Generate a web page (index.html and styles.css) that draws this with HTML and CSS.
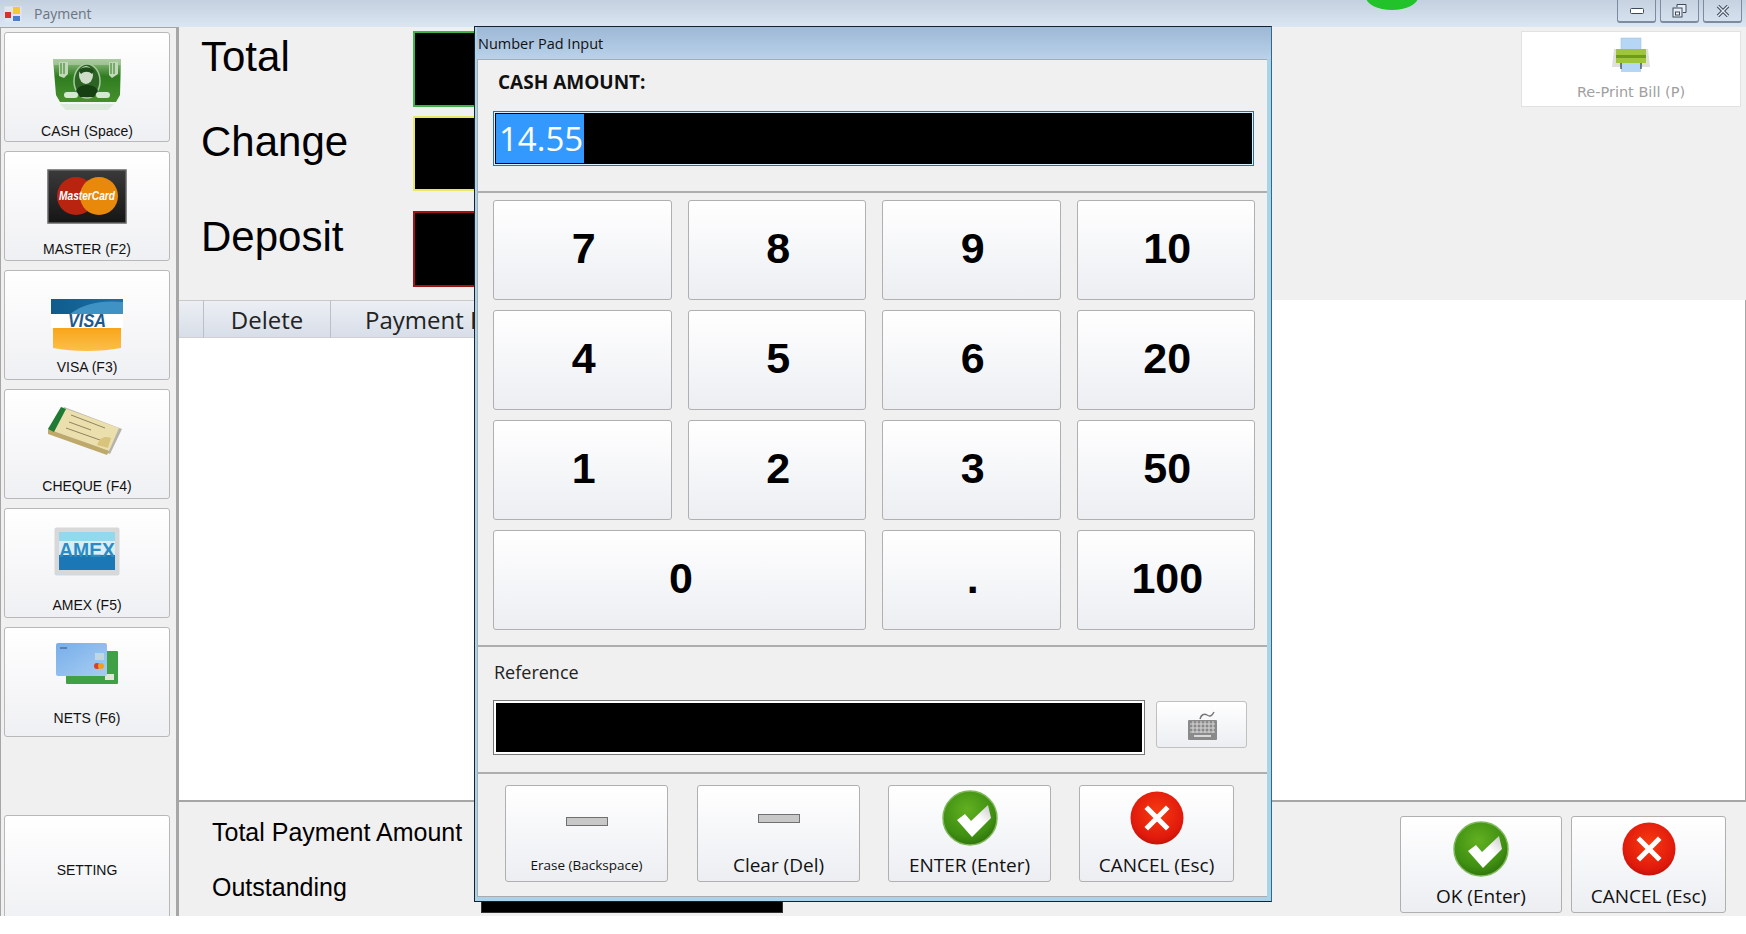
FILE: index.html
```html
<!DOCTYPE html>
<html lang="en">
<head>
    <meta charset="UTF-8">
    <title>Payment</title>
    <link rel="stylesheet" href="styles.css">
</head>
<body>
<svg class="sprite" width="0" height="0">
    <defs>
        <radialGradient id="okFill" cx="45%" cy="35%" r="70%">
            <stop offset="0" stop-color="#62b020"/>
            <stop offset="0.7" stop-color="#3f8f12"/>
            <stop offset="1" stop-color="#2c6e0a"/>
        </radialGradient>
        <radialGradient id="noFill" cx="50%" cy="40%" r="65%">
            <stop offset="0" stop-color="#f83a10"/>
            <stop offset="0.75" stop-color="#e01a0c"/>
            <stop offset="1" stop-color="#b81008"/>
        </radialGradient>
        <linearGradient id="checkFill" x1="0" y1="1" x2="1" y2="0">
            <stop offset="0" stop-color="#fff"/>
            <stop offset="0.6" stop-color="#fff"/>
            <stop offset="1" stop-color="#c8c8c8"/>
        </linearGradient>
        <linearGradient id="noteFill" x1="0" y1="0" x2="0" y2="1">
            <stop offset="0" stop-color="#9cc48c"/>
            <stop offset="0.4" stop-color="#2f7d20"/>
            <stop offset="1" stop-color="#478f2c"/>
        </linearGradient>
        <linearGradient id="mcFrame" x1="0" y1="0" x2="0" y2="1">
            <stop offset="0" stop-color="#3a3a3a"/>
            <stop offset="1" stop-color="#151515"/>
        </linearGradient>
        <linearGradient id="visaTop" x1="0" y1="0" x2="1" y2="0">
            <stop offset="0" stop-color="#0f5c8c"/>
            <stop offset="1" stop-color="#1d6fa5"/>
        </linearGradient>
        <linearGradient id="visaBottom" x1="0" y1="0" x2="0" y2="1">
            <stop offset="0" stop-color="#f9a51a"/>
            <stop offset="1" stop-color="#fbc04a"/>
        </linearGradient>
        <linearGradient id="cardBlue" x1="0" y1="0" x2="1" y2="1">
            <stop offset="0" stop-color="#78aeea"/>
            <stop offset="1" stop-color="#a6cdf2"/>
        </linearGradient>
        <symbol id="okIcon" viewBox="0 0 56 56">
            <circle cx="28" cy="28" r="27" fill="url(#okFill)" stroke="#7fb85a" stroke-width="1.5"/>
            <path d="M15 30l8-6 6 7 17-16 3 13-19 19z" fill="url(#checkFill)"/>
        </symbol>
        <symbol id="noIcon" viewBox="0 0 56 56">
            <circle cx="28" cy="28" r="26.5" fill="url(#noFill)"/>
            <path d="M19 19l18 18M37 19L19 37" stroke="#fff" stroke-width="5" stroke-linecap="square" fill="none"/>
        </symbol>
    </defs>
</svg>

<div class="app-window">
    <div class="title-bar">
        <svg class="app-icon" width="18" height="18" viewBox="0 0 18 18">
            <rect x="0.5" y="1.5" width="17" height="16" fill="#dfe6ee"/>
            <rect x="1" y="7" width="6" height="6" fill="#d8322a"/>
            <rect x="9" y="2" width="7" height="7" fill="#f3c93a"/>
            <rect x="9" y="11" width="7" height="5" fill="#4a7fd0"/>
        </svg>
        <span class="title-text">Payment</span>
        <div class="status-dot"></div>
        <div class="window-buttons">
            <div class="window-button">
                <svg width="14" height="6" viewBox="0 0 14 6"><rect x="0.5" y="0.5" width="13" height="5" rx="1" fill="#fff" stroke="#3d4a5c"/></svg>
            </div>
            <div class="window-button">
                <svg width="15" height="14" viewBox="0 0 15 14"><path d="M5 3V.5h9v8h-3" fill="#e8eef5" stroke="#3d4a5c"/><rect x="1" y="4" width="9" height="9" fill="#e8eef5" stroke="#3d4a5c"/><rect x="3.5" y="8" width="4" height="3" fill="#fff" stroke="#3d4a5c"/></svg>
            </div>
            <div class="window-button">
                <svg width="14" height="12" viewBox="0 0 14 12"><path d="M2 1l10 10M12 1L2 11" stroke="#3d4a5c" stroke-width="3.4"/><path d="M2 1l10 10M12 1L2 11" stroke="#e8eef5" stroke-width="1.4"/></svg>
            </div>
        </div>
    </div>

    <div class="app-body">
        <div class="tender-sidebar">
            <button class="tender-button">
                <svg class="tender-icon" width="74" height="54" viewBox="0 0 74 54">
                    <path d="M3 1h68l-1 36-4 7H10l-4-7z" fill="url(#noteFill)"/>
                    <path d="M3 1h68v6H3z" fill="#b5d0ae" opacity="0.6"/>
                    <path d="M9 4h9v12l-4 4-5-2zM59 4h9v12l-6 4-3-3z" fill="#c2d8bb"/>
                    <path d="M11 5v11M14 5v11M61 5v11M64 5v11" stroke="#5f9a52" stroke-width="1.5"/>
                    <ellipse cx="37" cy="23" rx="13" ry="17" fill="#2b6423" stroke="#a7c89e" stroke-width="1.5"/>
                    <ellipse cx="36" cy="17" rx="7" ry="9" fill="#cfdcc8"/>
                    <path d="M29 13c2-5 12-5 15 0l-2 3c-3-3-8-3-11 0z" fill="#1f4d1a"/>
                    <path d="M26 33c3-8 19-8 22 0l-4 6H30z" fill="#163f12"/>
                    <rect x="14" y="34" width="14" height="6" rx="3" fill="#d6e8cf"/>
                    <rect x="46" y="34" width="14" height="6" rx="3" fill="#d6e8cf"/>
                    <path d="M10 46h54l-6 6H16z" fill="#cfe2cb" opacity="0.6"/>
                </svg>
                <span class="tender-label">CASH (Space)</span>
            </button>
            <button class="tender-button">
                <svg class="tender-icon" width="80" height="55" viewBox="0 0 80 55">
                    <rect x="1" y="1" width="78" height="53" fill="url(#mcFrame)" stroke="#666" stroke-width="1.5"/>
                    <circle cx="29" cy="27" r="19" fill="#b8240f"/>
                    <circle cx="52" cy="27" r="19" fill="#e8890c"/>
                    <text class="card-mark" x="40" y="31" font-size="12" textLength="56" lengthAdjust="spacingAndGlyphs">MasterCard</text>
                </svg>
                <span class="tender-label">MASTER (F2)</span>
            </button>
            <button class="tender-button">
                <svg class="tender-icon" width="74" height="56" viewBox="0 0 74 56">
                    <path d="M1 1h72v15H1z" fill="url(#visaTop)"/>
                    <path d="M20 16C34 5 52 2 73 4v12z" fill="#3f93c4"/>
                    <rect x="1" y="16" width="72" height="14" fill="#fff"/>
                    <path d="M3 30h68v20c-20 4-48 4-68 0z" fill="url(#visaBottom)"/>
                    <text class="visa-mark" x="37" y="29" font-size="18" textLength="38" lengthAdjust="spacingAndGlyphs">VISA</text>
                </svg>
                <span class="tender-label">VISA (F3)</span>
            </button>
            <button class="tender-button">
                <svg class="tender-icon" width="80" height="50" viewBox="0 0 80 50">
                    <path d="M4 22L17 1l58 22-12 25z" fill="#7e7a6c" opacity="0.55"/>
                    <path d="M1 23L14 1l58 21-10 23z" fill="#ecdfae"/>
                    <path d="M1 23v5l59 21 2-4z" fill="#bea96a"/>
                    <path d="M1 23L14 1l5 2L7 26z" fill="#1f7a35"/>
                    <path d="M24 9l34 13M22 16l22 8M19 22l34 12" stroke="#8d8560" stroke-width="1"/>
                    <path d="M50 39c3-8 8-9 14-7l-3 10z" fill="#d9c47c"/>
                </svg>
                <span class="tender-label">CHEQUE (F4)</span>
            </button>
            <button class="tender-button">
                <svg class="tender-icon" width="66" height="49" viewBox="0 0 66 49">
                    <rect x="0.5" y="0.5" width="65" height="48" rx="2" fill="#d8d8d8"/>
                    <rect x="5" y="5" width="56" height="9" fill="#92d9ee"/>
                    <rect x="5" y="14" width="56" height="14" fill="#d9eef6"/>
                    <rect x="5" y="28" width="56" height="15" fill="#1b77b5"/>
                    <text class="amex-mark" x="33" y="30" font-size="20" textLength="56" lengthAdjust="spacingAndGlyphs">AMEX</text>
                </svg>
                <span class="tender-label">AMEX (F5)</span>
            </button>
            <button class="tender-button">
                <svg class="tender-icon" width="64" height="44" viewBox="0 0 64 44">
                    <rect x="11" y="9" width="52" height="33" rx="1" fill="#3fa045"/>
                    <rect x="50" y="32" width="9" height="6" fill="#dfe8d8"/>
                    <rect x="1" y="1" width="51" height="33" rx="2" fill="url(#cardBlue)"/>
                    <rect x="40" y="11" width="9" height="7" fill="#c4d6dc"/>
                    <circle cx="42" cy="24" r="3" fill="#d8402a"/>
                    <circle cx="46" cy="24" r="3" fill="#f0a020"/>
                    <rect x="5" y="5" width="7" height="2" fill="#5d7fb0"/>
                </svg>
                <span class="tender-label">NETS (F6)</span>
            </button>
            <button class="tender-button setting-button">
                <span class="tender-label">SETTING</span>
            </button>
        </div>

        <div class="main-panel">
            <div class="summary-panel">
                <div class="summary-grid">
                    <div class="summary-label">Total</div>
                    <div class="summary-box box-green"></div>
                    <div class="summary-label">Change</div>
                    <div class="summary-box box-yellow"></div>
                    <div class="summary-label deposit-row">Deposit</div>
                    <div class="summary-box box-red deposit-row"></div>
                </div>
                <button class="reprint-button">
                    <svg width="42" height="36" viewBox="0 0 42 36">
                        <rect x="11" y="1" width="20" height="14" fill="#b5d6f5" stroke="#9cc0e0" stroke-width="0.5"/>
                        <path d="M2 30l2-18h34l2 18z" fill="#dfdfdc"/>
                        <rect x="6" y="12" width="30" height="14" fill="#9fc63a"/>
                        <rect x="6" y="18" width="30" height="3" fill="#6e9a1e"/>
                        <rect x="11" y="26" width="20" height="9" fill="#b5d6f5"/>
                        <path d="M11 26v6M31 26v6" stroke="#2a3a4a" stroke-width="1.2"/>
                    </svg>
                    <span class="reprint-label">Re-Print Bill (P)</span>
                </button>
            </div>

            <div class="payment-grid">
                <div class="grid-header">
                    <div class="grid-cell row-head"></div>
                    <div class="grid-cell delete-col">Delete</div>
                    <div class="grid-cell payment-col">Payment Method</div>
                </div>
            </div>

            <div class="footer-panel">
                <div class="footer-grid">
                    <div class="footer-label">Total Payment Amount</div>
                    <div class="footer-box"></div>
                    <div class="footer-label">Outstanding</div>
                    <div class="footer-box"></div>
                </div>
                <div class="footer-actions">
                    <button class="action-button">
                        <svg class="action-icon" width="56" height="56"><use href="#okIcon"/></svg>
                        <span>OK (Enter)</span>
                    </button>
                    <button class="action-button cancel-wide">
                        <svg class="action-icon" width="56" height="56"><use href="#noIcon"/></svg>
                        <span>CANCEL (Esc)</span>
                    </button>
                </div>
            </div>
        </div>
    </div>
</div>

<div class="numpad-window">
    <div class="numpad-title">Number Pad Input</div>
    <div class="numpad-body">
        <div class="amount-section">
            <div class="amount-label">CASH AMOUNT:</div>
            <div class="amount-input"><span class="amount-selected">14.55</span></div>
        </div>
        <div class="keypad">
            <button class="key">7</button>
            <button class="key">8</button>
            <button class="key">9</button>
            <button class="key">10</button>
            <button class="key">4</button>
            <button class="key">5</button>
            <button class="key">6</button>
            <button class="key">20</button>
            <button class="key">1</button>
            <button class="key">2</button>
            <button class="key">3</button>
            <button class="key">50</button>
            <button class="key key-zero">0</button>
            <button class="key">.</button>
            <button class="key">100</button>
        </div>
        <div class="reference-section">
            <div class="reference-label">Reference</div>
            <div class="reference-row">
                <div class="reference-input"></div>
                <button class="keyboard-button">
                    <svg width="34" height="32" viewBox="0 0 34 32">
                        <path d="M15 10c1-4 4-6 7-4s5 1 7-3" fill="none" stroke="#777" stroke-width="1.5"/>
                        <rect x="3" y="11" width="29" height="20" rx="1" fill="#8a8a8a"/>
                        <path d="M5 15h25M5 19h25M5 23h25M8 12v12M12 12v12M16 12v12M20 12v12M24 12v12M28 12v12" stroke="#d8d8d8" stroke-width="1"/>
                        <rect x="9" y="26" width="17" height="2" fill="#d8d8d8"/>
                    </svg>
                </button>
            </div>
        </div>
        <div class="numpad-actions">
            <button class="action-button pad-action erase-button">
                <span class="dash-icon"></span>
                <span class="erase-text">Erase (Backspace)</span>
            </button>
            <button class="action-button pad-action clear-button">
                <span class="dash-icon"></span>
                <span>Clear (Del)</span>
            </button>
            <button class="action-button pad-action">
                <svg class="action-icon" width="56" height="56"><use href="#okIcon"/></svg>
                <span>ENTER (Enter)</span>
            </button>
            <button class="action-button pad-action cancel-narrow">
                <svg class="action-icon" width="56" height="56"><use href="#noIcon"/></svg>
                <span>CANCEL (Esc)</span>
            </button>
        </div>
    </div>
</div>
</body>
</html>
```

FILE: styles.css
```css
* {
    margin: 0;
    padding: 0;
    box-sizing: border-box;
}

html, body {
    height: 100%;
    background-color: #fff;
    overflow: hidden;
}

body {
    position: relative;
    font-family: 'Liberation Sans', Arial, sans-serif;
    color: #000;
}

button {
    font: inherit;
    color: inherit;
}

.sprite {
    position: absolute;
}

.app-window {
    height: 916px;
    display: flex;
    flex-direction: column;
    overflow: hidden;
}

.title-bar {
    position: relative;
    height: 27px;
    flex-shrink: 0;
    display: flex;
    align-items: center;
    padding-left: 4px;
    background: linear-gradient(#c3d0df, #dbe6f2);
}

.app-icon {
    margin-right: 12px;
}

.title-text {
    font-family: 'Open Sans', sans-serif;
    font-size: 14px;
    color: #6b7480;
}

.status-dot {
    position: absolute;
    top: -16px;
    left: 1366px;
    width: 52px;
    height: 26px;
    border-radius: 50%;
    background-color: #22c32a;
}

.window-buttons {
    display: flex;
    gap: 4px;
    align-self: flex-start;
    margin-left: auto;
    margin-right: 4px;
}

.window-button {
    width: 39px;
    height: 23px;
    display: flex;
    align-items: center;
    justify-content: center;
    border: 1px solid #7d8ba0;
    border-top: none;
    border-bottom-width: 2px;
    border-radius: 0 0 3px 3px;
    background: linear-gradient(#c6d2e0, #d6e1ee);
}

.app-body {
    flex: 1;
    min-height: 0;
    display: flex;
}

.tender-sidebar {
    width: 179px;
    flex-shrink: 0;
    display: flex;
    flex-direction: column;
    gap: 9px;
    padding: 4px 6px 0 3px;
    background-color: #f0f0f0;
    border-top: 1px solid #a6a6a6;
    border-left: 1px solid #a6a6a6;
    border-right: 3px solid #a6a6a6;
}

.tender-button {
    height: 110px;
    flex-shrink: 0;
    display: flex;
    flex-direction: column;
    align-items: center;
    border: 1px solid #b8b8b8;
    border-radius: 3px;
    background: linear-gradient(#fff, #eff0f3);
}

.tender-icon {
    margin-top: 25px;
}

.tender-button:nth-child(2) .tender-icon { margin-top: 17px; }
.tender-button:nth-child(3) .tender-icon { margin-top: 27px; }
.tender-button:nth-child(4) .tender-icon { margin-top: 16px; }
.tender-button:nth-child(5) .tender-icon { margin-top: 18px; }
.tender-button:nth-child(6) .tender-icon { margin-top: 14px; }

.tender-label {
    margin-top: auto;
    padding-bottom: 1px;
    font-size: 14px;
    line-height: 17px;
    color: #111;
}

.tender-button:nth-child(2) .tender-label { padding-bottom: 2px; }
.tender-button:nth-child(3) .tender-label { padding-bottom: 3px; }
.tender-button:nth-child(4) .tender-label { padding-bottom: 3px; }
.tender-button:nth-child(5) .tender-label { padding-bottom: 3px; }
.tender-button:nth-child(6) .tender-label { padding-bottom: 9px; }

.setting-button {
    margin-top: auto;
    margin-bottom: -9px;
    justify-content: center;
}

.tender-button.setting-button .tender-label {
    margin-top: 0;
    padding-bottom: 0;
}

.card-mark {
    font-family: 'Liberation Sans', sans-serif;
    font-weight: bold;
    font-style: italic;
    fill: #fff;
    text-anchor: middle;
}

.visa-mark {
    font-family: 'Liberation Sans', sans-serif;
    font-weight: bold;
    font-style: italic;
    fill: #1c5a8e;
    text-anchor: middle;
}

.amex-mark {
    font-family: 'Liberation Sans', sans-serif;
    font-weight: bold;
    fill: #2b8cc4;
    text-anchor: middle;
}

.main-panel {
    flex: 1;
    min-width: 0;
    display: flex;
    flex-direction: column;
}

.summary-panel {
    height: 273px;
    flex-shrink: 0;
    display: flex;
    justify-content: space-between;
    align-items: flex-start;
    padding: 4px 5px 0 22px;
    background-color: #f0f0f0;
}

.summary-grid {
    display: grid;
    grid-template-columns: 212px 280px;
    grid-template-rows: 76px 76px 86px;
    row-gap: 9px;
}

.summary-label {
    font-size: 42px;
    line-height: 52px;
    white-space: nowrap;
}

.summary-box {
    background-color: #000;
    border: 2px solid;
}

.box-green { border-color: #3fb34a; }
.box-yellow { border-color: #e8e868; height: 75px; }
.box-red { border-color: #a01414; }

.deposit-row {
    margin-top: 10px;
}

.reprint-button {
    width: 220px;
    height: 76px;
    display: flex;
    flex-direction: column;
    align-items: center;
    padding-top: 5px;
    background-color: #fff;
    border: 1px solid #e2e2e2;
    font-family: 'DejaVu Sans', sans-serif;
    font-size: 14.5px;
    line-height: 20px;
    color: #a0a0a0;
}

.reprint-label {
    margin-top: 9px;
}

.payment-grid {
    flex: 1;
    min-height: 0;
    background-color: #fff;
    border-right: 1px solid #a6a6a6;
}

.grid-header {
    height: 38px;
    display: flex;
}

.grid-cell {
    display: flex;
    align-items: center;
    justify-content: center;
    background: linear-gradient(#eceff4, #d8dee8);
    border-top: 1px solid #c8c8c8;
    border-bottom: 1px solid #d0d0d0;
    border-right: 1px solid #b8c0cc;
    font-family: 'Open Sans', sans-serif;
    font-size: 24px;
    color: #222;
}

.row-head { width: 25px; }
.delete-col { width: 127px; }
.payment-col { width: 260px; white-space: nowrap; overflow: hidden; justify-content: flex-start; padding-left: 34px; }

.footer-panel {
    height: 116px;
    flex-shrink: 0;
    display: flex;
    justify-content: space-between;
    background-color: #f0f0f0;
    border-top: 2px solid #a6a6a6;
    padding-right: 20px;
}

.footer-grid {
    display: grid;
    grid-template-columns: 269px 302px;
    grid-auto-rows: 55px;
    padding: 3px 0 0 33px;
}

.footer-label {
    display: flex;
    align-items: center;
    font-size: 25px;
    white-space: nowrap;
}

.footer-box {
    background-color: #000;
    border: 1px solid #fff;
    outline: 1px solid #333;
    outline-offset: -1px;
    margin-bottom: 2px;
}

.footer-actions {
    display: flex;
    gap: 9px;
    padding-top: 14px;
}

.action-button {
    width: 162px;
    height: 97px;
    flex-shrink: 0;
    display: flex;
    flex-direction: column;
    align-items: center;
    padding: 4px 0 4px;
    border: 1px solid #b0b0b0;
    border-radius: 3px;
    background: linear-gradient(#fff, #eceef2);
    font-family: 'Open Sans', sans-serif;
    font-size: 19px;
    line-height: 24px;
    color: #111;
    white-space: nowrap;
}

.action-button span:last-child {
    margin-top: auto;
}

.cancel-wide {
    width: 155px;
}

.numpad-window {
    position: absolute;
    top: 26px;
    left: 474px;
    width: 798px;
    height: 876px;
    display: flex;
    flex-direction: column;
    padding: 0 4px 4px 2px;
    border: 1px solid #16222e;
    border-right-color: #2e6a8a;
    background-color: #a9d3e8;
}

.numpad-title {
    height: 32px;
    flex-shrink: 0;
    margin: 0 -4px 0 0;
    padding-left: 1px;
    display: flex;
    align-items: center;
    background: linear-gradient(#9db8d6, #bad2ea);
    font-family: 'Open Sans', sans-serif;
    font-size: 14.5px;
    color: #111;
}

.numpad-body {
    flex: 1;
    min-height: 0;
    display: flex;
    flex-direction: column;
    background-color: #f0f0f0;
    border: 1px solid #a8acb0;
    border-right: none;
}

.amount-section {
    height: 133px;
    flex-shrink: 0;
    padding: 10px 15px 0;
    border-bottom: 2px solid #aeaeae;
}

.amount-label {
    height: 28px;
    padding-left: 5px;
    font-family: 'Open Sans', sans-serif;
    font-weight: bold;
    font-size: 19px;
    line-height: 24px;
    color: #111;
}

.amount-input {
    width: 761px;
    height: 55px;
    margin-top: 13px;
    display: flex;
    padding: 2px 0 2px 2px;
    background-color: #000;
    border: 1px solid #2e6fa5;
    outline: 1px solid #d8f0ff;
    outline-offset: -2px;
}

.amount-selected {
    display: block;
    padding: 0 1px 0 3px;
    background-color: #3399ff;
    font-family: 'Open Sans', sans-serif;
    font-size: 33px;
    line-height: 49px;
    color: #fff;
}

.keypad {
    height: 454px;
    flex-shrink: 0;
    display: grid;
    grid-template-columns: repeat(4, 178.5px);
    grid-auto-rows: 100px;
    column-gap: 16px;
    row-gap: 10px;
    padding: 7px 15px 0;
    border-bottom: 2px solid #aeaeae;
}

.key {
    display: flex;
    align-items: center;
    justify-content: center;
    padding: 0 0 3px 3px;
    border: 1px solid #b0b0b0;
    border-radius: 3px;
    background: linear-gradient(#fff, #eceef2);
    font-size: 43px;
    font-weight: bold;
}

.key-zero {
    grid-column: span 2;
}

.reference-section {
    height: 127px;
    flex-shrink: 0;
    padding: 13px 15px 0 16px;
    border-bottom: 2px solid #aeaeae;
}

.reference-label {
    height: 27px;
    font-family: 'Open Sans', sans-serif;
    font-size: 18px;
    line-height: 24px;
    color: #222;
}

.reference-row {
    display: flex;
    gap: 12px;
    margin-top: 14px;
}

.reference-input {
    width: 650px;
    height: 53px;
    background-color: #000;
    border: 2px solid #fff;
    outline: 1px solid #777;
}

.keyboard-button {
    width: 91px;
    height: 47px;
    display: flex;
    align-items: center;
    justify-content: center;
    border: 1px solid #c0c0c0;
    border-radius: 3px;
    background: linear-gradient(#fff, #eceef2);
}

.numpad-actions {
    flex: 1;
    display: flex;
    gap: 28px;
    padding: 11px 0 0 27px;
}

.pad-action {
    width: 163px;
}

.erase-button {
    margin-right: 1px;
}

.cancel-narrow {
    width: 155px;
}

.action-icon {
    flex-shrink: 0;
}

.dash-icon {
    width: 42px;
    height: 9px;
    margin-top: 27px;
    background-color: #c8c8c8;
    border: 1px solid #707070;
}

.clear-button .dash-icon {
    margin-top: 24px;
}

.action-button .erase-text {
    font-size: 13.5px;
}
```
